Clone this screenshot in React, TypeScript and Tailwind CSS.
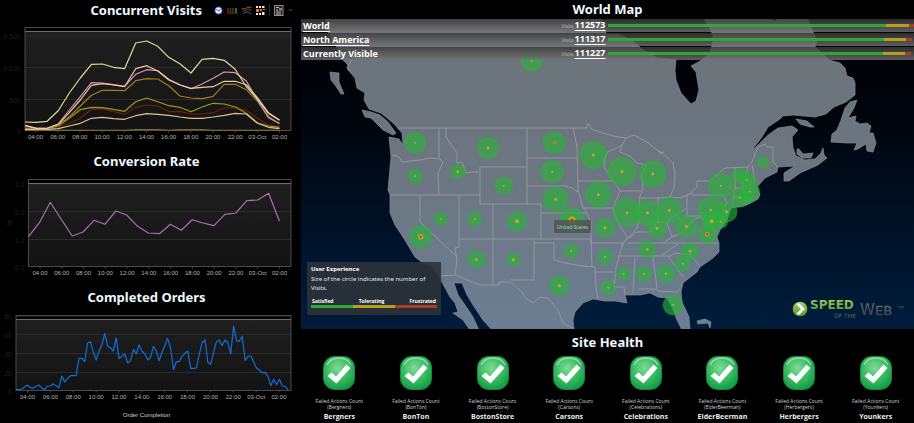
import React from "react";

const SANS = "font-['Open_Sans','Noto_Sans',sans-serif]";

const HOURS = ["04:00", "06:00", "08:00", "10:00", "12:00", "14:00", "16:00", "18:00", "20:00", "22:00", "03-Oct", "02:00"];

type Series = { color: string; values: number[] };

type ChartProps = {
  label: string;
  height: number;
  left: number;
  top: number;
  bottom: number;
  firstTick: number;
  lastTick: number;
  lastPoint: number;
  grid: { y: number; text: string }[];
  series: Series[];
  unit?: string;
};

// Series values are depths below the top of the chart, in thirds of a unit.
function Chart({ label, height, left, top, bottom, firstTick, lastTick, lastPoint, grid, series, unit }: ChartProps) {
  const right = 291;
  const tickStep = (lastTick - firstTick) / (HOURS.length - 1);
  const fillId = "plot-" + label.replace(/\s/g, "");
  return (
    <svg viewBox={`0 0 301 ${height}`} className="block h-auto w-full" role="img" aria-label={label}>
      <defs>
        <linearGradient id={fillId} x1="0" y1="0" x2="0" y2="1">
          <stop offset="0" stopColor="#1f1f1f" />
          <stop offset="1" stopColor="#131313" />
        </linearGradient>
      </defs>
      <rect x={left} y={top + 4} width={right - left} height={bottom - top - 4} fill={`url(#${fillId})`} />
      {grid.map((g) => (
        <g key={g.text}>
          <line x1={left} x2={right} y1={g.y} y2={g.y} stroke="#2b2b2b" />
          <text x={left - 4} y={g.y + 3} textAnchor="end" fontSize="7" fill="#202020">
            {g.text}
          </text>
        </g>
      ))}
      {unit && (
        <text x="0" y="0" transform={`translate(12 ${(top + bottom) / 2 + 3}) rotate(-90)`} fontSize="7" fill="#202020">
          {unit}
        </text>
      )}
      <rect x={left} y={top} width={right - left} height={bottom - top} fill="none" stroke="#4a4a4a" />
      <line x1={left} x2={right} y1={top + 4} y2={top + 4} stroke="#6e6e6e" />
      {series.map((s, i) => (
        <polyline
          key={i}
          fill="none"
          stroke={s.color}
          strokeWidth="1.2"
          strokeLinejoin="round"
          points={s.values
            .map((v, n) => `${(left + ((lastPoint - left) * n) / (s.values.length - 1)).toFixed(1)},${(v / 3).toFixed(1)}`)
            .join(" ")}
        />
      ))}
      {HOURS.map((h, i) => (
        <g key={h}>
          <line x1={firstTick + i * tickStep} x2={firstTick + i * tickStep} y1={bottom} y2={bottom + 2} stroke="#4a4a4a" />
          <text x={firstTick + i * tickStep} y={bottom + 8} textAnchor="middle" fontSize="6" fill="#b4b4b4">
            {h}
          </text>
        </g>
      ))}
    </svg>
  );
}

const VISITS: Series[] = [
  { color: "#7a6a3a", values: [391, 391, 391, 391, 391, 391, 391, 391, 391, 391, 389, 389, 389, 391, 389, 389, 389, 391, 391, 391, 391, 391, 391, 391] },
  { color: "#6b1f12", values: [380, 385, 386, 381, 370, 355, 328, 326, 335, 343, 322, 315, 318, 335, 334, 342, 342, 338, 324, 322, 331, 355, 375, 380] },
  { color: "#9a9a1c", values: [386, 386, 386, 378, 355, 329, 322, 323, 328, 334, 305, 294, 305, 317, 322, 335, 321, 310, 312, 321, 340, 368, 378, 382] },
  { color: "#dcc49a", values: [388, 388, 388, 386, 378, 370, 355, 352, 356, 358, 347, 341, 343, 346, 351, 355, 355, 351, 346, 340, 342, 370, 382, 386] },
  { color: "#9c8020", values: [384, 386, 386, 375, 350, 318, 286, 271, 271, 272, 242, 236, 237, 257, 288, 294, 296, 289, 253, 253, 269, 303, 349, 372] },
  { color: "#d795b8", values: [377, 384, 385, 372, 330, 290, 248, 249, 254, 259, 223, 209, 212, 238, 254, 266, 252, 235, 216, 218, 243, 300, 353, 370] },
  { color: "#f0c8a8", values: [376, 385, 385, 373, 338, 300, 256, 251, 255, 260, 206, 197, 213, 240, 255, 265, 262, 260, 244, 244, 254, 293, 338, 360] },
  { color: "#dcdc94", values: [366, 367, 364, 332, 279, 234, 193, 192, 202, 206, 129, 123, 139, 172, 191, 219, 178, 175, 181, 208, 260, 297, 340, 361] },
];

const CONVERSION: Series[] = [
  { color: "#a86fa8", values: [275, 233, 172, 223, 273, 261, 226, 238, 198, 210, 244, 264, 266, 238, 256, 224, 234, 242, 208, 204, 167, 165, 145, 229] },
];

const ORDERS: Series[] = [
  {
    color: "#0f6fd8",
    values: [
      327, 327, 325, 319, 313, 321, 323, 317, 313, 322, 327, 316, 316, 310, 315, 321, 286, 304, 294, 285, 285, 285, 233, 233, 243, 187, 183, 215, 238, 212,
      192, 158, 196, 202, 211, 172, 234, 227, 220, 247, 240, 206, 219, 192, 212, 220, 238, 230, 197, 211, 240, 215, 194, 173, 202, 267, 243, 243, 227, 218,
      211, 263, 263, 262, 222, 186, 178, 244, 251, 215, 183, 178, 195, 178, 186, 220, 136, 180, 182, 166, 239, 227, 226, 243, 262, 268, 276, 275, 287, 315,
      296, 312, 296, 316, 317, 327,
    ],
  },
];

function shift(series: Series[], by: number): Series[] {
  return series.map((s) => ({ ...s, values: s.values.map((v) => v - by) }));
}

function Title({ children }: { children: React.ReactNode }) {
  return (
    <h2 className="text-center font-['Noto_Sans','Open_Sans',sans-serif] text-[13px] leading-[19px] font-bold whitespace-nowrap text-[#eefaff]">
      {children}
    </h2>
  );
}

function Toolbar() {
  return (
    <div className="flex items-center gap-1 pl-3">
      <button type="button" aria-label="Time range">
        <svg width="9" height="9" viewBox="0 0 9 9">
          <circle cx="4.5" cy="4.5" r="3.6" fill="#e8efff" stroke="#4a62c8" strokeWidth="1" />
          <path d="M2.4 3.4 L4.5 5 L6.6 3.4" fill="none" stroke="#3a4a88" strokeWidth="1" />
        </svg>
      </button>
      <button type="button" aria-label="Colour scale">
        <svg width="11" height="9" viewBox="0 0 11 9">
          <path d="M1 2v5" stroke="#7a1a10" strokeWidth="1.6" />
          <path d="M3.5 2v5" stroke="#6a2c14" strokeWidth="1.6" />
          <path d="M6 2v5" stroke="#3c3c14" strokeWidth="1.6" />
          <path d="M9 2v5" stroke="#1f8a20" strokeWidth="1.8" />
          <path d="M0 7.5h11" stroke="#452018" />
        </svg>
      </button>
      <button type="button" aria-label="Line chart">
        <svg width="10" height="9" viewBox="0 0 10 9" fill="none">
          <path d="M0 2.5 L3 3 L6 1 L9.5 1.5" stroke="#95602f" />
          <path d="M0 5 L3 5 L6 3 L9.5 4.5" stroke="#7a3c2e" />
          <path d="M1 8 L3 6.5 L6 6 L9.5 8" stroke="#4d5c80" />
        </svg>
      </button>
      <button type="button" aria-label="Table">
        <svg width="9" height="9" viewBox="0 0 9 9">
          <g fill="#ffe6c4">
            <rect x="0" y="0" width="2" height="2" /><rect x="3" y="0" width="2" height="2" /><rect x="6" y="0" width="2.5" height="2" />
            <rect x="0" y="7" width="2" height="2" /><rect x="3" y="7" width="2" height="2" /><rect x="6" y="6" width="2.5" height="3" />
          </g>
          <g fill="#d07a3c">
            <rect x="0" y="3" width="3" height="3" /><rect x="4" y="3" width="2" height="2" /><rect x="7" y="3" width="2" height="1" />
          </g>
        </svg>
      </button>
      <span className="h-3 w-px bg-[#2c2c2c]" />
      <button type="button" aria-label="Report options" className="flex items-center gap-1">
        <svg width="10" height="11" viewBox="0 0 10 11">
          <rect x="0.5" y="0.5" width="8.5" height="10" fill="#222" stroke="#8c8c8c" />
          <path d="M2 2.500h3M2 5h2M2 7h5M2 9h5" stroke="#cfcfcf" strokeWidth="0.9" />
          <rect x="5" y="3" width="3" height="2.5" fill="#b46a6a" />
        </svg>
        <svg width="5" height="3" viewBox="0 0 5 3">
          <path d="M0.5 0h4L2.5 2.5z" fill="#333" />
        </svg>
      </button>
    </div>
  );
}

const LAND = [
  // North American mainland
  "M326 19 L327 30 L337 47 L343 60 L348 65 L348 70 L355 78 L357 88 L365 93 L364 100 L369 109 L381 113 L393 123 L402 133 L403 145 L399 139 L389 137 L391 157 L388 190 L390 195 L390 213 L395 225 L403 237 L415 257 L423 263 L433 267 L438 275 L450 297 L455 303 L458 312 L453 313 L463 320 L470 330 L479 330 L473 317 L465 305 L458 295 L454 283 L462 283 L467 295 L473 305 L483 320 L492 330 L574 330 L573 320 L575 312 L583 303 L593 299 L605 301 L615 301 L627 303 L625 295 L640 295 L650 293 L658 297 L667 298 L672 307 L677 320 L682 330 L690 330 L689 317 L682 302 L681 292 L683 283 L697 272 L700 267 L713 258 L719 252 L719 243 L717 237 L720 230 L727 220 L731 208 L738 207 L747 205 L758 199 L760 195 L757 187 L765 178 L777 172 L778 167 L795 166 L784 173 L784 181 L789 181 L800 173 L818 165 L827 158 L824 155 L823 148 L821 153 L815 159 L805 160 L796 156 L793 148 L792 137 L798 130 L792 126 L778 128 L768 135 L755 148 L752 150 L762 137 L768 127 L780 119 L783 116 L793 115 L815 117 L826 114 L834 107 L846 102 L855 95 L855 83 L853 78 L847 76 L845 68 L840 63 L829 60 L822 53 L815 47 L817 40 L812 30 L808 19 L778 19 L774 22 L772 19 L704 19 L708 25 L713 35 L713 42 L710 52 L702 60 L691 66 L696 72 L699 90 L696 101 L691 104 L681 93 L676 80 L675 70 L676 60 L657 58 L642 49 L632 40 L617 34 L607 35 L604 28 L601 19 Z",
  // Vancouver Island and Haida Gwaii
  "M362 110 L371 112 L380 115 L388 122 L396 133 L393 135 L383 130 L374 121 L371 118 L365 117 Z",
  "M330 72 L339 73 L339 82 L344 94 L341 94 L335 85 L331 80 Z",
  // Newfoundland, Anticosti and Prince Edward Island
  "M857 100 L854 108 L848 118 L856 116 L855 121 L860 124 L867 123 L871 126 L869 133 L873 133 L876 143 L873 152 L867 151 L866 144 L858 149 L854 150 L857 143 L847 143 L831 142 L832 134 L837 130 L841 120 L845 108 L850 102 Z",
  "M796 119 L807 121 L814 127 L810 127 L800 124 Z",
  "M797 149 L799 149 L803 154 L813 153 L811 158 L802 158 L797 154 Z",
  // Bahamas
  "M697 321 L705 319 L711 322 L710 328 L708 323 L698 324 Z",
];

const BORDERS = [
  "M399 128 H587 V124 L590 125 L591 129 L603 133 L613 136 L626 138 L634 135 L647 142 L657 150 L662 153 L673 163 L675 173 L674 187 L670 197 L680 198 L692 193 L692 191 L697 187 L697 181 L710 181 L725 168 L748 167 L752 162 L758 147 L765 144 L767 147 L773 147 L773 162 L778 167",
  "M657 150 L660 153 L664 152 M603 162 L607 152 L615 149 L622 145 L626 138 M622 145 L620 152 L630 156 L637 163 L647 165 L642 175 L643 190 L639 198",
  "M439 128 V158 M392 155 L397 156 L400 158 L402 162 L410 161 L420 160 L430 158 L440 159 L443 162 L438 173 L439 195",
  "M390 195 H480 M446 128 V137 L452 146 L457 153 L457 163 L462 162 L466 173 L472 172 L479 172",
  "M480 167 V204 M480 167 H527 M480 204 H541 M527 128 V204 M527 158 H577 M527 186 H565 L572 188 L578 192",
  "M541 204 V239 M541 213 H587 M493 204 V285 M460 239 H591 M459 195 V247 L455 248 L457 260 L455 275",
  "M420 195 V222 L456 256 M440 276 L455 275 L480 285 H499 V282 H510 L522 292 L525 298 L533 303 L540 297 L548 298 L558 310 L563 323 L574 329",
  "M510 280 H534 V239 M534 243 H554 V260 L565 263 L582 266 L595 267 M591 239 L592 267 M595 267 L596 287 L598 299 M595 272 H614",
  "M591 243 H622 L622 247 L616 267 L614 287 H624 L625 295 M587 213 L591 222 V243 M583 208 H612 M573 128 L577 147 L578 190 L583 208 L587 213",
  "M578 181 H614 M607 152 L604 167 L614 181 L620 191 L613 208 L618 223 L627 237 L622 247 M620 191 H642",
  "M639 198 L640 217 L637 228 L628 238 M622 243 L637 232 L650 232 L657 222 L667 223 L672 217 L687 208 M658 198 V222 M639 198 L658 198 L670 197",
  "M687 194 V217 M692 195 H723 L727 203 L723 208 L727 216 M687 216 H722 L723 226 M628 243 H718 M618 256 H670",
  "M635 257 L633 293 M653 257 L657 288 M638 289 H657 L658 291 L677 292 L680 289 M668 256 L683 277 M670 256 L675 253 L690 255 L700 266",
  "M662 255 L678 244 M663 243 L675 235 M667 223 L672 237 L683 233 L693 220 L700 217 M700 217 L710 224 L716 234",
  "M735 168 V188 L733 203 M748 167 L743 185 V188 M752 165 L755 182 M735 188 H753 M733 197 H751 M747 197 L746 204",
  "M352 60 L347 67 L349 71",
];

// x, y, radius, size of the tolerating core, size of the frustrated core
const CITIES: number[][] = [
  [531.7, 60.7, 11, 1, 0], [415.3, 142.7, 11, 1, 0], [415.3, 176.3, 7.5, 1, 0], [457.7, 171.7, 7.5, 1.5, 0], [488, 148, 11, 1.5, 0],
  [441, 219, 7, 1, 0], [474.7, 219, 7.5, 1, 0], [420.7, 236.7, 11.5, 2.6, 1.3], [476.3, 259.7, 9, 1.5, 0],
  [554.3, 142.7, 11.5, 1.6, 1], [552.3, 171.7, 11.5, 1, 0], [503.7, 185.7, 9.3, 1, 0], [555.7, 199.3, 12.7, 1.5, 0],
  [517, 221.3, 10.3, 2, 0], [572, 220, 12.7, 3.5, 1.4], [513.3, 259.7, 7, 1.5, 0], [571.3, 251, 7.5, 1, 0], [559.3, 285.7, 10.3, 1.6, 0],
  [593.3, 155, 14, 1.6, 0], [622, 171.7, 14.5, 1.6, 0], [652.7, 174, 13.7, 1.5, 0], [598.3, 194.7, 13.3, 1.5, 0],
  [627, 212.7, 14.7, 1.5, 0], [647.3, 212.7, 12.7, 1.5, 0], [669.3, 210.3, 13.3, 1.5, 0], [657, 228.3, 10.3, 1.5, 0],
  [686.3, 226.3, 11.3, 1.5, 0], [605, 227.7, 10, 1.5, 0], [605, 257, 7.7, 1, 0], [647.3, 249.3, 9, 1.3, 0],
  [690, 251, 9.3, 1.5, 0], [682.7, 263.7, 8, 1, 0], [623.7, 273.7, 7, 1, 0], [644, 273.7, 8, 1, 0], [666, 273.7, 9.3, 1.2, 0],
  [608.3, 287.7, 7.3, 1, 0], [673, 305, 10.3, 1, 0], [707.3, 234.3, 10, 2.2, 1.2], [720.7, 185.7, 13, 1, 0],
  [739.3, 176, 8, 0, 0], [747, 180, 9, 1, 0], [750, 191.7, 10, 1, 0], [740, 197.7, 9.7, 1, 0], [747, 197, 6, 0, 0],
  [710.7, 210, 13.3, 1.3, 0], [726.7, 211.7, 10.7, 1.5, 0], [711.7, 221.3, 10, 2, 0], [720.7, 221.7, 7.3, 1, 0], [763, 162.3, 6.3, 0, 0],
];

function MapDrawing() {
  return (
    <svg viewBox="301 19 613 310" className="block h-auto w-full" role="img" aria-label="Visits by state">
      <defs>
        <linearGradient id="sea" x1="0" y1="0" x2="0" y2="1">
          <stop offset="0" stopColor="#000002" />
          <stop offset="0.35" stopColor="#00060f" />
          <stop offset="1" stopColor="#001d3d" />
        </linearGradient>
        <linearGradient id="land" gradientUnits="userSpaceOnUse" x1="0" y1="19" x2="0" y2="329">
          <stop offset="0" stopColor="#6c737a" />
          <stop offset="0.5" stopColor="#6c7681" />
          <stop offset="1" stopColor="#6c7e92" />
        </linearGradient>
        <linearGradient id="speed" x1="0" y1="0" x2="0" y2="1">
          <stop offset="0" stopColor="#a3d15a" />
          <stop offset="1" stopColor="#4f9a35" />
        </linearGradient>
        <linearGradient id="web" x1="0" y1="0" x2="0" y2="1">
          <stop offset="0" stopColor="#6c7076" />
          <stop offset="1" stopColor="#33383f" />
        </linearGradient>
      </defs>
      <rect x="301" y="19" width="613" height="310" fill="url(#sea)" />
      {LAND.map((d) => (
        <path key={d} d={d} fill="url(#land)" stroke="#868b90" strokeWidth="0.7" strokeLinejoin="round" />
      ))}
      <g fill="none" stroke="#959a9f" strokeWidth="0.9" strokeLinejoin="round">
        {BORDERS.map((d) => (
          <path key={d} d={d} />
        ))}
      </g>
      {CITIES.map(([x, y, r]) => (
        <circle key={`${x}-${y}`} cx={x} cy={y} r={r} fill="#28b437" fillOpacity="0.62" />
      ))}
      {CITIES.map(([x, y, , t, f]) => (
        <g key={`${x}-${y}`}>
          <circle cx={x} cy={y} r={t} fill="#b5b020" />
          <circle cx={x} cy={y} r={f} fill="#d43a22" />
        </g>
      ))}
      <rect x="554" y="220" width="37" height="13" rx="1" fill="#4b5250" fillOpacity="0.8" />
      <text x="572.5" y="229" textAnchor="middle" fontSize="5" fill="#c4c8c8">
        United States
      </text>
      <g className="font-['DejaVu_Sans',sans-serif]">
        <circle cx="800" cy="309" r="7.3" fill="url(#speed)" />
        <path d="M797 303.5 L799.5 303.5 L805 309 L799.5 314.5 L797 314.5 L796.5 313.5 L801 309 L796.5 304.5 Z" fill="#fff" />
        <text x="810" y="309" fontSize="12" fontWeight="bold" fill="url(#speed)">SPEED</text>
        <text x="834" y="318" fontSize="6" fill="#5b6570">OF THE</text>
        <text x="860" y="315" fontSize="15" fill="url(#web)">W</text>
        <text x="875" y="315" fontSize="13" fill="url(#web)" stroke="url(#web)" strokeWidth="0.4">EB</text>
        <text x="898" y="309" fontSize="4" fill="#4a4f56">TM</text>
      </g>
    </svg>
  );
}

const REGIONS = [
  { name: "World", link: true, visits: "112573", good: 277, fair: 23, poor: 5, rest: 0 },
  { name: "North America", link: true, visits: "111317", good: 275, fair: 22, poor: 6, rest: 2 },
  { name: "Currently Visible", link: false, visits: "111227", good: 274, fair: 22, poor: 6, rest: 3 },
];

function RegionRow({ region }: { region: (typeof REGIONS)[number] }) {
  return (
    <div className="flex h-[13px] items-center bg-linear-to-b from-[#383838]/80 to-[#747474]/80 text-[9px] leading-3 font-bold text-white">
      <div className="flex min-w-0 flex-1 items-center justify-between pr-[2px] pl-[2px]">
        {region.link ? (
          <a href="#region" className="underline underline-offset-2">{region.name}</a>
        ) : (
          <span>{region.name}</span>
        )}
        <span className="flex items-baseline gap-px">
          <span className="text-[5px] font-normal text-[#bdbdbd]">Visits</span>
          <a href="#visits" className="underline underline-offset-2">{region.visits}</a>
        </span>
      </div>
      <div className="flex h-[3px] w-1/2">
        <span className="bg-[#2fa836]" style={{ flexGrow: region.good }} />
        <span className="bg-[#b3a01e]" style={{ flexGrow: region.fair }} />
        <span className="bg-[#b03a2a]" style={{ flexGrow: region.poor }} />
        <span style={{ flexGrow: region.rest }} />
      </div>
    </div>
  );
}

function Legend() {
  return (
    <div className="absolute bottom-[14px] left-[6px] w-[134px] bg-[#2b323a]/90 px-1 py-[3px] text-white shadow-md">
      <h3 className="text-[6px] leading-2 font-bold">User Experience</h3>
      <p className="pt-[2px] font-['Noto_Sans',sans-serif] text-[6px] leading-[9px] text-[#e2e6ea]">
        Size of the circle indicates the number of Visits.
      </p>
      <div className="flex justify-between px-px pt-1 text-[5px] leading-2 font-bold">
        <span>Satisfied</span>
        <span>Tolerating</span>
        <span>Frustrated</span>
      </div>
      <div className="mb-1 grid h-[3px] grid-cols-3">
        <span className="bg-[#2fa836]" />
        <span className="bg-[#b3a01e]" />
        <span className="bg-[#b03a2a]" />
      </div>
    </div>
  );
}

const SITES = ["Bergners", "BonTon", "BostonStore", "Carsons", "Celebrations", "ElderBeerman", "Herbergers", "Younkers"];

function Site({ name }: { name: string }) {
  return (
    <li className="flex flex-col items-center text-center whitespace-nowrap">
      <svg width="32" height="34" viewBox="0 0 32 34" role="img" aria-label="Healthy">
        <rect x="0.5" y="0.5" width="31" height="33" rx="11" fill="url(#badge)" stroke="#128c40" />
        <path d="M4 9 Q7 2 16 2 Q25 2 28 9" fill="none" stroke="#d4f5dc" strokeOpacity="0.55" strokeWidth="1.5" />
        <path d="M4.5 20 L8.5 16.5 L13 20.5 L23.5 8.5 L27.5 12 L13.5 27.5 Z" fill="#fff" />
      </svg>
      <p className="mt-2 text-[5px] leading-[6px] text-[#cfd4d4]">
        Failed Actions Count
        <br />({name})
      </p>
      <p className="mt-[3px] text-[7px] leading-2 font-bold text-[#e6ecec]">{name}</p>
    </li>
  );
}

export default function App() {
  return (
    <main className={`grid min-h-screen grid-cols-[301px_1fr] content-start overflow-hidden bg-black ${SANS}`}>
      <div className="font-['Liberation_Sans',Arial,sans-serif]">
        <section>
          <div className="grid h-5 grid-cols-[1fr_auto_1fr] items-center pr-2">
            <span />
            <Title>Concurrent Visits</Title>
            <Toolbar />
          </div>
          <Chart
            label="Concurrent Visits" height={132} left={25} top={7.5} bottom={110.5} firstTick={35.5} lastTick={279.5} lastPoint={279.5}
            grid={[{ y: 16, text: "1,500" }, { y: 47.5, text: "1,000" }, { y: 79.5, text: "500" }, { y: 110.5, text: "0" }]}
            series={shift(VISITS, 60)}
          />
        </section>
        <section>
          <div className="h-5 pr-2">
            <Title>Conversion Rate</Title>
          </div>
          <Chart
            label="Conversion Rate" height={116} left={28.5} top={7.5} bottom={94.5} firstTick={40} lastTick={279.5} lastPoint={279.5}
            grid={[{ y: 12, text: "3.0" }, { y: 39.5, text: "2.0" }, { y: 67.5, text: "1.0" }, { y: 94.5, text: "0.0" }]}
            series={shift(CONVERSION, 81)} unit="%"
          />
        </section>
        <section>
          <div className="h-5 pr-2">
            <Title>Completed Orders</Title>
          </div>
          <Chart
            label="Completed Orders" height={101} left={16} top={7.5} bottom={82.5} firstTick={27.5} lastTick={279} lastPoint={288}
            grid={[{ y: 8, text: "80" }, { y: 26.5, text: "60" }, { y: 45.5, text: "40" }, { y: 64.5, text: "20" }, { y: 82.5, text: "0" }]}
            series={shift(ORDERS, 82)}
          />
          <p className="pr-2 text-center text-[6px] leading-3 text-[#c8d4d8]">Order Completion</p>
        </section>
      </div>

      <div className="min-w-0">
        <section>
          <Title>World Map</Title>
          <div className="relative">
            <MapDrawing />
            <div className="absolute inset-x-0 top-0 flex flex-col gap-px">
              {REGIONS.map((r) => (
                <RegionRow key={r.name} region={r} />
              ))}
            </div>
            <Legend />
          </div>
        </section>
        <section className="pt-1">
          <Title>Site Health</Title>
          <svg width="0" height="0" className="absolute" aria-hidden="true">
            <radialGradient id="badge" cx="0.45" cy="0.35" r="0.7">
              <stop offset="0" stopColor="#7fdc98" />
              <stop offset="0.5" stopColor="#3fbd66" />
              <stop offset="1" stopColor="#0c9a42" />
            </radialGradient>
          </svg>
          <ul className="grid grid-cols-8 pt-1">
            {SITES.map((s) => (
              <Site key={s} name={s} />
            ))}
          </ul>
        </section>
      </div>
    </main>
  );
}
